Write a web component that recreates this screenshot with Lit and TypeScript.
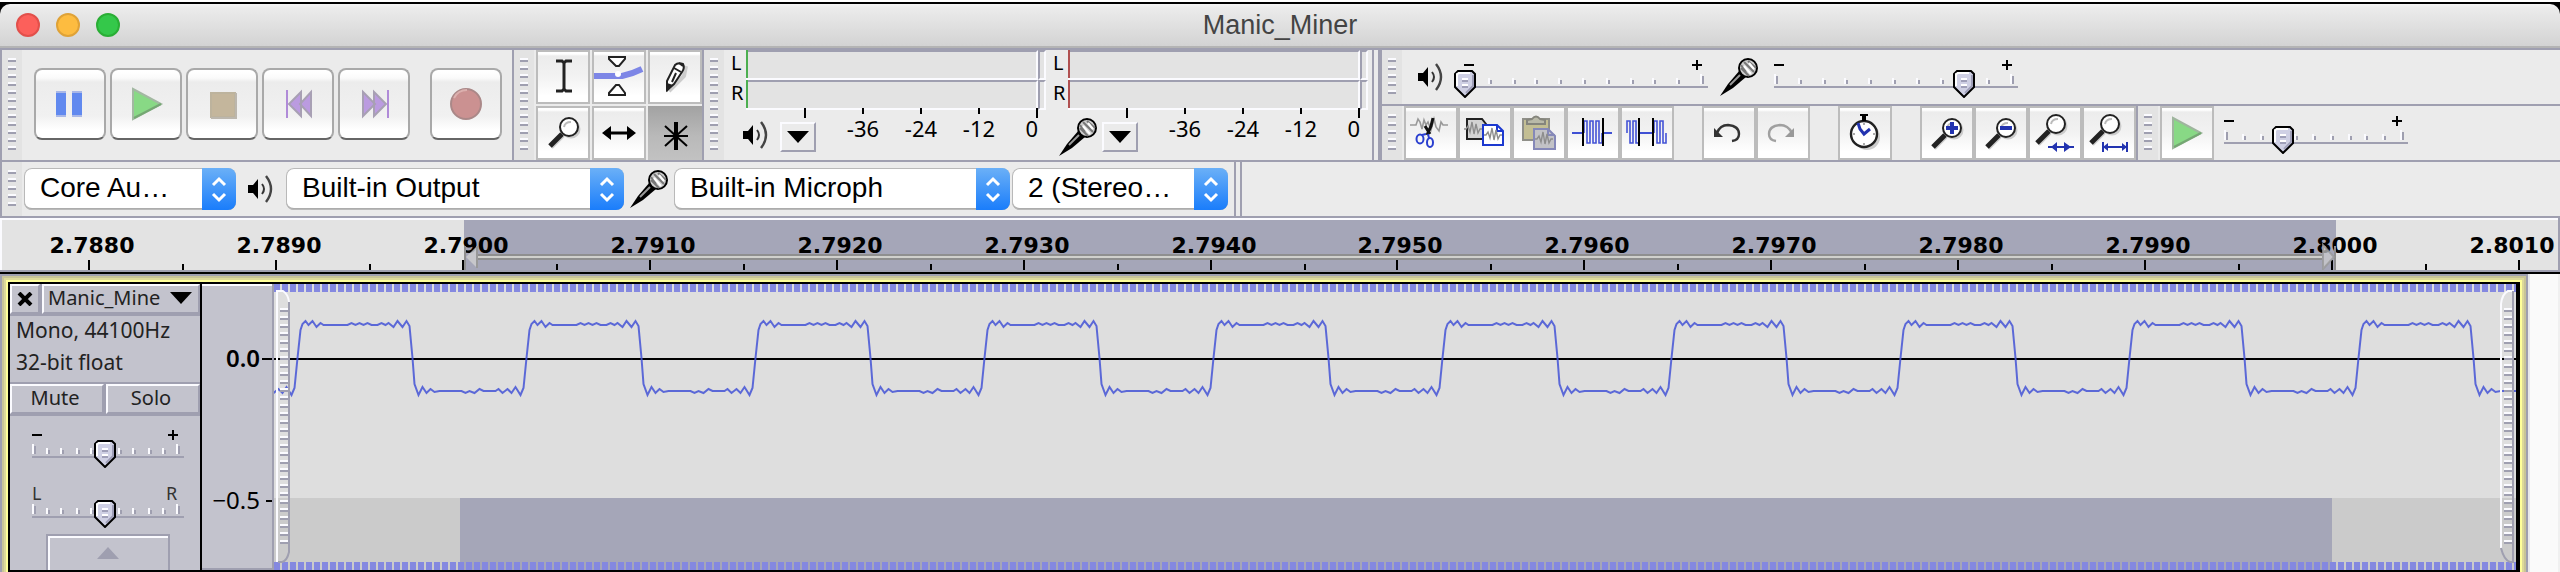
import { LitElement, html, svg, css, nothing } from "lit";
import { customElement, property } from "lit/decorators.js";
import { styleMap } from "lit/directives/style-map.js";

/* ---------- shared pieces ---------- */

const base = css`
  * { box-sizing: border-box; }
  :host {
    --edge: #9f9fb0;
    --shine: #fbfbff;
    --face: #ebebeb;
    --shade: #e3e3e3;
    --select: #a5a6b8;
    --panel: #c3c3cd;
    --wave: #3f50d4;
  }
  svg { display: block; }
  button { margin: 0; padding: 0; border: 0; background: none; color: #000; font: inherit; }
`;

const zigzag = (x: number, y: number, heights: number[], step: number) =>
  heights.map((h, i) => `${x + i * step},${y + h}`).join(" ");

const lens = (cx: number, cy: number) => svg`
  <circle cx=${cx + 2} cy=${cy + 2} r="9.5" fill="#ccc"></circle>
  <path d="M${cx - 6} ${cy + 8}L${cx - 18} ${cy + 20}" stroke="#ccc" stroke-width="5"></path>
  <path d="M${cx - 7} ${cy + 7}L${cx - 19} ${cy + 19}" stroke="#222" stroke-width="5"></path>
  <circle cx=${cx} cy=${cy} r="9" fill="#fff" stroke="#222" stroke-width="2"></circle>
  <path d="M${cx - 5} ${cy}Q${cx - 4} ${cy - 5} ${cx + 2} ${cy - 5}" fill="none" stroke="#bbb" stroke-width="2"></path>`;

const squiggle = (x: number, y: number) => svg`
  <polyline points=${zigzag(x, y, [0, 0, -3, 3, -7, 5, -5, 4, 0, 0], 2)} fill="none" stroke="#8d8d8d" stroke-width="1.4"></polyline>`;

const pulses = (x: number, count: number) => {
  let d = `M${x} 27`;
  for (let i = 0; i < count; i++) {
    d += `V${i % 2 ? 37 : 15}H${x + (i + 1) * 3}`;
  }
  return svg`<path d=${d + "V27"} fill="none" stroke="#4453d6" stroke-width="1.6"></path>`;
};

const icons: Record<string, unknown> = {
  ibeam: svg`<path d="M20 11H26L28 13L30 11H36M20 41H26L28 39L30 41H36M28 12V40" fill="none" stroke="#222" stroke-width="3"></path>`,
  envelope: svg`
    <path d="M2 26H30Q40 24 50 19" fill="none" stroke="#7d86e6" stroke-width="6"></path>
    <circle cx="26" cy="24" r="3" fill="#fff"></circle>
    <path d="M17 7H33V9L27 16H24L17 9Z M17 45H33V43L27 35H24L17 43Z" fill="#fff" stroke="#222" stroke-width="2"></path>`,
  pencil: svg`
    <path d="M21 41L36 26L38 16" fill="none" stroke="#ccc" stroke-width="4"></path>
    <path d="M19 40V31L27 15Q30 12 35 14Q37 18 34 22L26 34Z" fill="#fff" stroke="#222" stroke-width="2"></path>
    <path d="M19 42V33L25 35Z" fill="#222"></path>
    <path d="M26 18L33 22M28 23L24 32M31 13L35 16" stroke="#222" stroke-width="2"></path>`,
  lens: lens(33, 21),
  shift: svg`<path d="M18 27H36" stroke="#000" stroke-width="3"></path><path d="M10 27L19 20V34ZM44 27L35 20V34Z"></path>`,
  star: svg`<path d="M28 16V44M17 20L39 40M39 20L17 40M16 30H40" stroke="#000" stroke-width="2"></path><path d="M28 16V44" stroke="#000" stroke-width="4"></path>`,
  cut: svg`
    <polyline points="6,19 12,19 14,13 16,16 18,23 20,14 22,19 24,16 27,24 30,13 32,21 35,25 37,16 39,19 44,19" fill="none" stroke="#999" stroke-width="1.6"></polyline>
    <path d="M29 12L27 20L23 29M21 20L26 28" fill="none" stroke="#111" stroke-width="3"></path>
    <path d="M22 28L18 29M24 28L25 32" stroke="#2a3fd0" stroke-width="2"></path>
    <ellipse cx="16" cy="33" rx="3.5" ry="4.5" fill="none" stroke="#2a3fd0" stroke-width="2"></ellipse>
    <ellipse cx="26" cy="36.5" rx="3" ry="4.5" fill="none" stroke="#2a3fd0" stroke-width="2"></ellipse>`,
  copy: svg`
    <path d="M9 13H24L28 18V33H9Z" fill="#d3d3d3" stroke="#222" stroke-width="2"></path>${squiggle(6, 23)}
    <path d="M25 19H39L45 25V39H25Z" fill="#fff" stroke="#1c39d0" stroke-width="2"></path>
    <path d="M39 19V25H45" fill="none" stroke="#1c39d0" stroke-width="2"></path>${squiggle(26, 29)}`,
  paste: svg`
    <path d="M11 13H37V34H11Z" fill="#c3be93" stroke="#8f8f88" stroke-width="2"></path>
    <path d="M15 18V14L20 13Q24 8 28 13L33 14V18Z" fill="#b9b9a8" stroke="#85857c" stroke-width="2"></path>
    <path d="M22 23H36L43 30V43H22Z" fill="#c2c2c6" stroke="#8588b8" stroke-width="2"></path>
    <path d="M36 23V29H43" fill="none" stroke="#8588b8" stroke-width="2"></path>${squiggle(23, 33)}`,
  trim: svg`<path d="M6 27H17M37 27H46" stroke="#3f50d4" stroke-width="2"></path>${pulses(18, 6)}<path d="M17 12V40M37 12V40" stroke="#000" stroke-width="2"></path>`,
  silence: svg`${pulses(7, 4)}${pulses(34, 4)}<path d="M19 27H33" stroke="#3f50d4" stroke-width="2"></path><path d="M19 12V40M33 12V40" stroke="#000" stroke-width="2"></path>`,
  undo: svg`<path d="M15 27Q18 19 26 19Q37 20 37 28Q37 34 30 35" fill="none" stroke="#333" stroke-width="2.4"></path><path d="M12 22V31H21Z" fill="#333"></path>`,
  redo: svg`<path d="M36 27Q32 19 24 19Q13 20 13 28Q13 34 20 35" fill="none" stroke="#a0a0a0" stroke-width="2.4"></path><path d="M38 22V31H29Z" fill="#999"></path>`,
  clock: svg`
    <circle cx="29" cy="31" r="13" fill="#ccc"></circle>
    <circle cx="26" cy="28" r="13" fill="#fff" stroke="#222" stroke-width="2.4"></circle>
    <path d="M22 8H30V10H28V15H24V10H22Z"></path>
    <path d="M26 17V19M26 37V39M15 28H17M35 28H37" stroke="#aaa" stroke-width="2"></path>
    <path d="M20 17L22 23L26 28L32 23" fill="none" stroke="#2233b0" stroke-width="3"></path>`,
  zoomIn: svg`${lens(32, 22)}<path d="M26 22H38M32 16V28" stroke="#2233b0" stroke-width="4"></path>`,
  zoomOut: svg`${lens(32, 22)}<path d="M26 22H38" stroke="#2233b0" stroke-width="4"></path>`,
  zoomSel: svg`${lens(28, 18)}<path d="M20 41H46" stroke="#2233b0" stroke-width="2"></path><path d="M23 41L29 36V46ZM43 41L36 36V46Z" fill="#2233b0"></path>`,
  zoomFit: svg`${lens(28, 18)}<path d="M21 41H45M21 36V46M45 36V46" stroke="#2233b0" stroke-width="2"></path><path d="M21 41L26 37V45ZM45 41L40 37V45Z" fill="#2233b0"></path>`,
  playSmall: svg`<path d="M13 12L41 27L13 42Z" fill="#88d985" stroke="#9fb59e" stroke-width="2"></path><path d="M14 41L41 27" stroke="#74a872" stroke-width="2"></path>`,
};

/* Large transport glyphs, drawn in a 72 x 72 box. */
const transport: Record<string, unknown> = {
  Pause: svg`<path d="M22 24H32V48H22ZM38 24H48V48H38Z" fill="#6189ef"></path><path d="M22 24H32M38 24H48M22 48H32M38 48H48" stroke="#a9b8e8" stroke-width="2"></path>`,
  Play: svg`<path d="M23 21L51 36L23 51Z" fill="#88d985" stroke="#a3b8a2" stroke-width="2"></path><path d="M24 50L51 36" stroke="#74a872" stroke-width="2"></path>`,
  Stop: svg`<path d="M25 25H49V49H25Z" fill="#c4b69c" stroke="#bdb39d" stroke-width="2"></path><path d="M50 25V50H25" fill="none" stroke="#bcb7ae" stroke-width="2"></path>`,
  "Skip to Start": svg`<path d="M39 24V48L27 36ZM49 24V48L38 36Z" fill="#bb9be0" stroke="#a8a0b4" stroke-width="2"></path><path d="M25 22V50" stroke="#b08bd8" stroke-width="2"></path>`,
  "Skip to End": svg`<path d="M25 24V48L37 36ZM36 24V48L48 36Z" fill="#bb9be0" stroke="#a8a0b4" stroke-width="2"></path><path d="M50 22V50" stroke="#b08bd8" stroke-width="2"></path>`,
  Record: svg`<circle cx="36" cy="36" r="15" fill="#cb9191" stroke="#a88" stroke-width="2"></circle><path d="M24 30Q28 22 37 22" fill="none" stroke="#dcb0ae" stroke-width="2"></path>`,
};

const speaker = html`<svg width="26" height="28" viewBox="0 0 26 28" aria-hidden="true">
  <path d="M0 10H5L10 4V24L5 18H0Z"></path>
  <path d="M14 9Q18 14 14 19" fill="none" stroke="#333" stroke-width="2"></path>
  <path d="M18 1Q28 14 18 27" fill="none" stroke="#444" stroke-width="2.4"></path>
</svg>`;

const mic = html`<svg width="38" height="38" viewBox="0 0 38 38" aria-hidden="true">
  <path d="M0 38L8 26L20 12L26 19L13 30Z"></path>
  <path d="M10 27L20 17" stroke="#999" stroke-width="2"></path>
  <circle cx="28" cy="10" r="9" fill="#cfcfcf" stroke="#000" stroke-width="2"></circle>
  <path d="M21 10L29 18M24 4L34 14M28 3L36 10M21 7L26 14" stroke="#777" stroke-width="2"></path>
  <path d="M24 8L31 16M29 5L34 11" stroke="#fff" stroke-width="2"></path>
</svg>`;

/* ---------- slider ---------- */

@customElement("aud-slider")
class AudSlider extends LitElement {
  @property() label = "";
  @property() ends = "signs";
  @property({ type: Number }) width = 244;
  @property({ type: Number }) value = 50;

  static styles = [base, css`
    :host { display: block; }
    .box { display: grid; }
    .box > * { grid-area: 1 / 1; }
    svg { overflow: visible; }
    text { font: 18px "Noto Sans", sans-serif; fill: #333; }
    input {
      appearance: none;
      width: auto;
      height: 28px;
      margin: 10px -4px 0 -10px;
      background: none;
    }
    input::-webkit-slider-runnable-track { height: 28px; background: none; }
    input::-webkit-slider-thumb {
      appearance: none;
      width: 22px;
      height: 28px;
      background: url("data:image/svg+xml,%3Csvg xmlns='http://www.w3.org/2000/svg' viewBox='0 0 22 28'%3E%3Cpath d='M4 1H18L21 4V17L11 27L1 17V4Z' fill='%23cfd0e4' stroke='%23000' stroke-width='2'/%3E%3Cpath d='M3 16V4L5 3H16' fill='none' stroke='%23fff' stroke-width='2'/%3E%3Cpath d='M19 5V16L12 23' fill='none' stroke='%239f9fb8' stroke-width='2'/%3E%3Cpath d='M8 9H14M8 15H14' stroke='%23fff' stroke-width='2'/%3E%3Cpath d='M8 11H14M8 17H14' stroke='%239f9fb8' stroke-width='2'/%3E%3C/svg%3E") no-repeat;
    }
  `];

  render() {
    const w = this.width;
    const ticks = Array.from({ length: 11 }, (_, i) => ({
      x: Math.round((i * (w - 8)) / 20) * 2,
      long: i === 0 || i === 10,
    }));
    return html`<div class="box" style=${styleMap({ width: `${w}px` })}>
      <svg width=${w} height="38" aria-hidden="true">
        ${this.ends === "signs"
          ? svg`<path d=${`M0 5H10M${w - 16} 5H${w - 6}M${w - 11} 0V10`} stroke="#000" stroke-width="2"></path>`
          : svg`<text x="0" y="10">L</text><text x=${w - 18} y="10">R</text>`}
        ${ticks.map(t => svg`
          <path d=${`M${t.x + 1} ${t.long ? 14 : 18}V24`} stroke="#fbfbff" stroke-width="2"></path>
          <path d=${`M${t.x + 3} ${t.long ? 16 : 20}V24`} stroke="#9f9fb0" stroke-width="2"></path>`)}
        <path d=${`M0 27H${w}`} stroke="#9f9fb0" stroke-width="2"></path>
      </svg>
      <input type="range" min="0" max="100" .value=${String(this.value)} aria-label=${this.label}>
    </div>`;
  }
}

/* ---------- level meter ---------- */

@customElement("aud-meter")
class AudMeter extends LitElement {
  @property() kind = "playback";

  static styles = [base, css`
    :host { display: block; width: 322px; font: 22px/28px "Noto Sans", sans-serif; }
    .bars { display: grid; row-gap: 2px; }
    .bar { display: grid; grid-template-columns: 22px 292px 8px; height: 28px; }
    .name { padding-left: 7px; font-size: 20px; line-height: 26px; }
    .level { background: var(--shade); border-top: 2px solid var(--edge); border-bottom: 2px solid var(--shine); border-right: 2px solid var(--shine); }
    .level::before { content: ""; display: block; width: 2px; height: 28px; margin-top: -2px; background: var(--zero); }
    .clip { background: var(--shade); border: 2px solid var(--shine); border-top-color: var(--edge); border-left-color: var(--edge); }
    .playback { --zero: #4caf50; }
    .recording { --zero: #b05050; }
    .foot { display: flex; height: 42px; }
    .icon { width: 56px; padding: 0 0 8px 8px; display: flex; justify-content: center; align-items: center; }
    .icon.recording { align-items: flex-start; }
    .menu { width: 36px; height: 30px; margin-top: 4px; border: 2px solid var(--shine); border-right-color: var(--edge); border-bottom-color: var(--edge); display: grid; place-items: center; }
    .scale { display: grid; grid-template-columns: 58px 58px 58px 30px; margin-left: 18px; margin-top: -4px; text-align: center; }
    .scale :last-child { text-align: right; }
  `];

  render() {
    const playback = this.kind === "playback";
    return html`
      <div class="bars ${this.kind}">
        ${["L", "R"].map(c => html`<div class="bar"><span class="name">${c}</span><span class="level"></span><span class="clip"></span></div>`)}
      </div>
      <svg width="322" height="10" aria-hidden="true">
        ${[81, 139, 197, 255, 313].map(x => svg`<path d=${`M${x} 0V${x === 81 || x === 313 ? 10 : 6}`} stroke="#000" stroke-width="2"></path>`)}
      </svg>
      <div class="foot">
        <span class="icon ${this.kind}">${playback ? speaker : mic}</span>
        <button class="menu" aria-label="${this.kind} meter menu"><svg width="22" height="12"><path d="M0 0H22L11 12Z"></path></svg></button>
        <div class="scale">${["-36", "-24", "-12", "0"].map(t => html`<span>${t}</span>`)}</div>
      </div>`;
  }
}

/* ---------- time ruler ---------- */

@customElement("aud-timeline")
class AudTimeline extends LitElement {
  static styles = [base, css`
    :host { display: block; background: var(--shade); border: 2px solid var(--edge); border-width: 0 2px 2px 0; }
    .frame { border-top: 2px solid var(--shine); border-left: 2px solid var(--shine); }
    text { font: bold 22px "DejaVu Sans", sans-serif; text-anchor: middle; }
  `];

  render() {
    const labels = Array.from({ length: 14 }, (_, i) => (2.788 + i * 0.001).toFixed(4));
    const at = (i: number) => Math.round(87 + i * 186.92);
    return html`<div class="frame"><svg width="100%" height="50">
      <rect x="462" y="0" width="1872" height="50" fill="#a5a6b8"></rect>
      ${labels.map((t, i) => svg`
        <text x=${Math.min(at(i) + 3, 2510)} y="33">${t}</text>
        <path d=${`M${at(i)} 40V50M${at(i) + 94} 44V50`} stroke="#000" stroke-width="2"></path>`)}
      <path d="M463 26V50M2333 26V50" stroke="#8f8f8f" stroke-width="2"></path>
      <path d="M476 37H2320" stroke="#8f8f8f" stroke-width="6"></path>
      <path d="M476 37H2320" stroke="#d0d0cc" stroke-width="2"></path>
      <path d="M464 37L475 26V48Z" fill="#cfcfcf" fill-opacity="0.8"></path><path d="M475 26V48" stroke="#999" stroke-width="2"></path>
      <path d="M2332 37L2321 25V49Z" fill="#cfcfcf" fill-opacity="0.7" stroke="#999" stroke-opacity="0.8" stroke-width="2"></path>
    </svg></div>`;
  }
}

/* ---------- waveform ---------- */

const HIGH: [number, number][] = [
  [-3, 104], [0, 74], [3, 46], [5, 40], [8, 37], [11, 41], [15, 37], [19, 43], [23, 39], [26, 41], [50, 41],
  [54, 39], [58, 41], [62, 39], [66, 41], [70, 39], [74, 41], [80, 41], [84, 39], [88, 41],
  [91, 39], [96, 43], [100, 37], [105, 43], [109, 37], [112, 42],
];
const LOW: [number, number][] = [
  [115, 74], [117, 100], [121, 111], [125, 103], [129, 109], [133, 105], [137, 108], [142, 107], [164, 107],
  [168, 109], [172, 107], [177, 109], [182, 105], [186, 107], [198, 107], [201, 105],
  [205, 109], [210, 105], [214, 109], [218, 103], [223, 111],
];

@customElement("aud-waveform")
class AudWaveform extends LitElement {
  static styles = [base, css`:host { display: block; background: #dedede; }`];

  private handle(mirrored = false) {
    const stripes = Array.from({ length: 30 }, (_, i) => 24 + i * 8);
    return svg`
      ${mirrored
        ? svg`<path d="M-15 264V20Q-14 10 -8 7H-2" fill="none" stroke="#fbfbff" stroke-width="2"></path>
              <path d="M-3 7V278H-6Q-12 276 -15 264" fill="none" stroke="#9f9fb0" stroke-width="2"></path>`
        : svg`<path d="M3 278V7H9Q14 10 15 18" fill="none" stroke="#fbfbff" stroke-width="2"></path>
              <path d="M15 18V268Q13 277 8 278H4" fill="none" stroke="#9f9fb0" stroke-width="2"></path>`}
      ${stripes.map(y => svg`
        <path d=${`M${mirrored ? -12 : 6} ${y + 1}h8`} stroke="#fbfbff" stroke-width="2"></path>
        <path d=${`M${mirrored ? -12 : 6} ${y + 3}h8`} stroke="#9f9fb0" stroke-width="2"></path>`)}`;
  }

  render() {
    const points: string[] = [];
    for (let cycle = -1; cycle < 11; cycle++) {
      for (const [x, y] of [...HIGH, ...LOW]) points.push(`${23.5 + cycle * 229 + x},${y}`);
    }
    return html`<svg width="100%" height="286">
      <rect x="0" y="214" width="100%" height="72" fill="#cbcbcb"></rect>
      <rect x="186" y="214" width="1872" height="72" fill="#a5a6b8"></rect>
      <line x1="0" x2="100%" y1="4" y2="4" stroke="#8488e0" stroke-width="8" stroke-dasharray="6 2"></line>
      <line x1="0" x2="100%" y1="282" y2="282" stroke="#8488e0" stroke-width="8" stroke-dasharray="6 2"></line>
      <line x1="0" x2="100%" y1="75" y2="75" stroke="#000" stroke-width="2"></line>
      <polyline points=${points.join(" ")} fill="none" stroke="#4453d6" stroke-opacity="0.85" stroke-width="2"></polyline>
      ${this.handle()}
      <svg x="100%" overflow="visible">${this.handle(true)}</svg>
    </svg>`;
  }
}

/* ---------- track ---------- */

@customElement("aud-track")
class AudTrack extends LitElement {
  static styles = [base, css`
    :host {
      display: grid;
      grid-template-columns: 190px 74px minmax(0, 1fr);
      padding: 10px 12px 10px 10px;
      background: #000;
      box-shadow: inset 0 0 0 2px var(--edge), inset 0 0 0 4px #c8c498, inset 0 0 0 6px #ddd99a, inset 0 0 0 8px #ffff9a;
      font: 20px/28px "Noto Sans", sans-serif;
      color: #222;
    }
    .panel { background: var(--panel); display: flex; flex-direction: column; }
    .pair { display: grid; column-gap: 2px; background: var(--edge); border-bottom: 2px solid var(--edge); }
    .head { grid-template-columns: 30px 1fr; }
    .switches { grid-template-columns: 1fr 1fr; border-top: 2px solid var(--edge); }
    .bevel { height: 30px; background: var(--panel); border: 2px solid var(--edge); border-top-color: var(--shine); border-left-color: var(--shine); color: #222; line-height: 24px; }
    .switches .bevel { padding: 0 4px 4px 0; }
    .close { display: grid; place-items: center; }
    .title { display: flex; align-items: center; justify-content: space-between; padding: 0 6px 2px 4px; }
    .info { padding: 0 6px 2px; font-size: 21px; line-height: 32px; height: 66px; margin-top: -2px; margin-bottom: 2px; }
    .sliders { padding: 14px 0 0 22px; display: grid; row-gap: 22px; }
    .fold { width: 124px; height: 36px; margin: 6px 0 0 36px; border: 2px solid var(--edge); border-bottom: 0; box-shadow: inset 2px 2px 0 var(--shine); display: grid; place-items: center; }
    .scale { margin-left: 2px; background: var(--panel); border: 2px solid var(--edge); border-width: 0 2px 2px 0; box-shadow: inset 0 2px 0 var(--shine); }
    .scale text { font: 24px "Noto Sans", sans-serif; text-anchor: end; }
    .scale .zero { font-weight: 600; }
  `];

  render() {
    return html`
      <div class="panel">
        <div class="pair head">
          <button class="bevel close" aria-label="Close track"><svg width="16" height="14"><path d="M2 1L14 13M14 1L2 13" stroke="#000" stroke-width="4"></path></svg></button>
          <button class="bevel title"><span>Manic_Mine</span><svg width="22" height="12" aria-hidden="true"><path d="M0 0H22L11 12Z"></path></svg></button>
        </div>
        <div class="info">Mono, 44100Hz<br>32-bit float</div>
        <div class="pair switches">
          <button class="bevel">Mute</button>
          <button class="bevel">Solo</button>
        </div>
        <div class="sliders">
          <aud-slider label="Gain" width="152" value="50"></aud-slider>
          <aud-slider label="Pan" ends="sides" width="152" value="50"></aud-slider>
        </div>
        <button class="fold" aria-label="Collapse track"><svg width="22" height="12"><path d="M0 12H22L11 0Z" fill="#9f9fb0"></path></svg></button>
      </div>
      <div class="scale"><svg width="70" height="284">
        <text class="zero" x="58" y="83">0.0</text>
        <text x="58" y="225">−0.5</text>
        <path d="M60 75H70M64 217H70" stroke="#000" stroke-width="2"></path>
      </svg></div>
      <aud-waveform></aud-waveform>`;
  }
}

/* ---------- window ---------- */

@customElement("app-root")
class AppRoot extends LitElement {
  static styles = [base, css`
    :host { display: block; height: 100vh; overflow: hidden; background: #fbfbfb; color: #000; font-family: "Liberation Sans", Arial, sans-serif; }
    .top { background: #000; border-top: 2px solid #fff; padding-top: 2px; }
    .titlebar {
      display: grid; grid-template-columns: 1fr auto 1fr; align-items: center;
      height: 44px; padding: 0 16px;
      border-bottom: 2px solid #b4b4b4; border-radius: 10px 10px 0 0;
      background: linear-gradient(#f4f4f4, #ebebeb 4px, #d3d3d3);
    }
    h1 { margin: 0; font-size: 27px; line-height: 30px; font-weight: 400; color: #444; }
    .lights { display: flex; gap: 16px; }
    .light { width: 24px; height: 24px; border-radius: 50%; }
    .red { background: #fc605b; border: 2px solid #e2504b; }
    .amber { background: #fdbc40; border: 2px solid #dfa237; }
    .green { background: #34c84a; border: 2px solid #2aae35; }

    .docks { background: var(--face); border-top: 2px solid var(--edge); }
    .row { display: flex; border-bottom: 2px solid var(--edge); border-left: 2px solid var(--edge); }
    .stack { flex: 1; display: flex; flex-direction: column; border-left: 4px solid var(--edge); margin-left: 4px; }
    .bar { display: flex; }
    .sub { height: 54px; }
    .sub + .sub { border-top: 2px solid var(--edge); height: 56px; }
    .ruled { border-right: 2px solid var(--edge); }
    .grip { width: 20px; background: var(--shade); padding: 8px 6px; }
    .grip::before { content: ""; display: block; height: 36px; background: repeating-linear-gradient(var(--shine) 0 2px, var(--edge) 2px 4px, transparent 4px 8px); }
    .grip.tall::before { height: 92px; }

    .transport { display: flex; gap: 4px; padding: 18px 10px 20px 12px; }
    .big {
      width: 72px; height: 72px; border-radius: 8px; border: 2px solid #a9a9a9; border-bottom-color: #666;
      background: linear-gradient(#fff 0 2px, #fafafa 8px, #ececec 12px, #f1f1f1 46px, #fff 60px);
    }
    .big svg { margin: -2px; }
    .big.apart { margin-left: 16px; }
    .tools { display: grid; grid-template-columns: repeat(3, 54px); gap: 2px; padding-left: 2px; }
    .tool { width: 54px; height: 54px; box-shadow: inset 0 0 0 2px #bcbcbc; background: linear-gradient(#fff 4px, #ececec 6px, #f2f2f2 26px, #fff 46px); }
    .tool.pressed { box-shadow: none; background: linear-gradient(#a2a2a2, #b9b9b9 30px, #c2c2c2); }
    .meters { display: flex; padding-right: 4px; }
    .edit { display: flex; gap: 28px; padding-left: 2px; }
    .group { display: flex; }
    .mixer { align-items: center; }
    .mixer .grip { align-self: stretch; }
    .mixer .out { margin: 0 20px 0 16px; }
    .mixer .in { margin: 0 16px 0 12px; }
    .mixer aud-slider { margin-top: 4px; }
    .play { padding: 0 10px 0 2px; }
    .speed { margin-top: 10px; }

    .devices { height: 54px; align-items: center; padding-right: 6px; gap: 2px; }
    .devices .grip { align-self: stretch; }
    .choice {
      display: flex; height: 42px; border-radius: 8px; overflow: hidden; background: #fff;
      box-shadow: inset 0 0 0 1px #b9b9b9, inset 0 -2px 0 #acacac;
    }
    .choice select { flex: 1; min-width: 0; appearance: none; margin: 0; border: 0; padding: 0 0 4px 16px; background: none; color: #000; font: 28px "Liberation Sans", Arial, sans-serif; }
    .choice svg { width: 34px; height: 42px; background: linear-gradient(#6bb0f7, #1a7dfb); pointer-events: none; }
    .host { width: 212px; }
    .output { width: 338px; }
    .input { width: 336px; }
    .channels { width: 216px; }
    .devicon { width: 46px; display: grid; place-items: center; }
    .rule { width: 0; border-left: 2px solid var(--edge); margin-left: 4px; }

    .tracks { display: flex; border-top: 2px solid #000; }
    aud-track { flex: 1; min-width: 0; }
    .scroll { width: 32px; background: #fafafa; border-left: 2px solid #e9e9ec; border-right: 2px solid #f0f0f0; }
  `];

  private tool(icon: string, label: string, extra = "") {
    return html`<button class="tool ${extra}" aria-label=${label} aria-pressed=${extra === "pressed" ? "true" : nothing}>
      <svg width="54" height="54" viewBox="0 0 54 54" aria-hidden="true">${icons[icon]}</svg></button>`;
  }

  private choice(cls: string, label: string, text: string) {
    return html`<div class="choice ${cls}">
      <select aria-label=${label}><option>${text}</option></select>
      <svg viewBox="0 0 34 42" aria-hidden="true"><path d="M11 17L17 11L23 17M11 26L17 32L23 26" fill="none" stroke="#fff" stroke-width="3"></path></svg>
    </div>`;
  }

  render() {
    return html`
      <header class="top"><div class="titlebar">
        <div class="lights">
          <button class="light red" aria-label="Close"></button>
          <button class="light amber" aria-label="Minimize"></button>
          <button class="light green" aria-label="Zoom"></button>
        </div>
        <h1>Manic_Miner</h1>
      </div></header>

      <div class="docks">
        <div class="row">
          <div class="bar ruled">
            <span class="grip tall"></span>
            <div class="transport">
              ${Object.entries(transport).map(([name, glyph]) => html`
                <button class="big ${name === "Record" ? "apart" : ""}" aria-label=${name}>
                  <svg width="72" height="72" viewBox="0 0 72 72" aria-hidden="true">${glyph}</svg></button>`)}
            </div>
          </div>
          <div class="bar ruled">
            <span class="grip tall"></span>
            <div class="tools">
              ${this.tool("ibeam", "Selection")}${this.tool("envelope", "Envelope")}${this.tool("pencil", "Draw")}
              ${this.tool("lens", "Zoom")}${this.tool("shift", "Time Shift")}${this.tool("star", "Multi-Tool", "pressed")}
            </div>
          </div>
          <div class="bar ruled">
            <span class="grip tall"></span>
            <div class="meters"><aud-meter kind="playback"></aud-meter><aud-meter kind="recording"></aud-meter></div>
          </div>
          <div class="stack">
            <div class="bar sub mixer">
              <span class="grip"></span>
              <span class="out">${speaker}</span>
              <aud-slider label="Output volume" width="244" value="0"></aud-slider>
              <span class="in">${mic}</span>
              <aud-slider label="Input volume" width="244" value="80"></aud-slider>
            </div>
            <div class="bar sub">
              <span class="grip"></span>
              <div class="edit ruled">
                <div class="group">
                  ${this.tool("cut", "Cut")}${this.tool("copy", "Copy")}${this.tool("paste", "Paste")}${this.tool("trim", "Trim")}${this.tool("silence", "Silence")}
                </div>
                <div class="group">${this.tool("undo", "Undo")}${this.tool("redo", "Redo")}</div>
                <div class="group">${this.tool("clock", "Sync-Lock")}</div>
                <div class="group">
                  ${this.tool("zoomIn", "Zoom In")}${this.tool("zoomOut", "Zoom Out")}${this.tool("zoomSel", "Fit Selection")}${this.tool("zoomFit", "Fit Project")}
                </div>
              </div>
              <span class="grip"></span>
              <div class="play">${this.tool("playSmall", "Play at Speed")}</div>
              <aud-slider class="speed" label="Playback speed" width="184" value="33"></aud-slider>
            </div>
          </div>
        </div>
        <div class="row">
          <div class="bar devices ruled">
            <span class="grip"></span>
            ${this.choice("host", "Audio host", "Core Au…")}
            <span class="devicon">${speaker}</span>
            ${this.choice("output", "Output device", "Built-in Output")}
            <span class="devicon">${mic}</span>
            ${this.choice("input", "Input device", "Built-in Microph")}
            ${this.choice("channels", "Input channels", "2 (Stereo…")}
          </div>
          <span class="rule"></span>
        </div>
      </div>

      <aud-timeline></aud-timeline>
      <main class="tracks"><aud-track></aud-track><div class="scroll"></div></main>`;
  }
}
